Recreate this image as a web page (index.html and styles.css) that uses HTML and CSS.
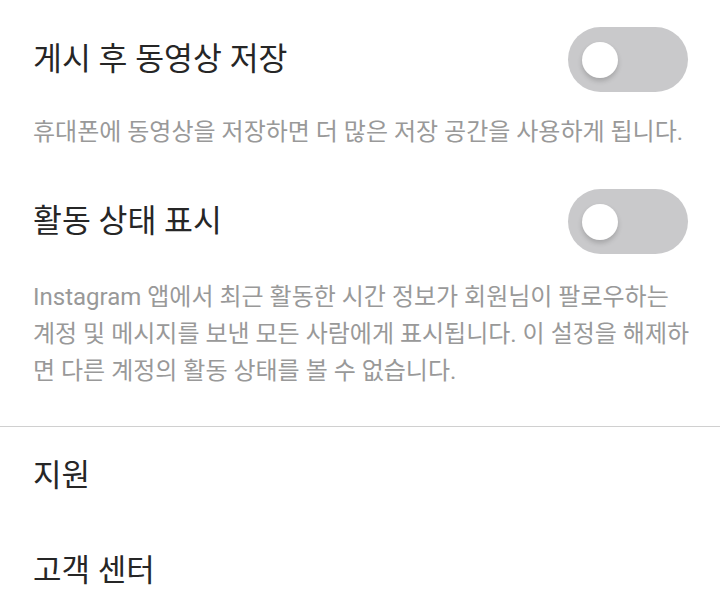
FILE: index.html
```html
<!DOCTYPE html>
<html lang="ko">
<head>
<meta charset="utf-8">
<link rel="stylesheet" href="styles.css">
</head>
<body>
<div class="page">
  <section class="setting setting-first">
    <div class="setting-row">
      <span class="setting-title">게시 후 동영상 저장</span>
      <span class="toggle"><span class="knob"></span></span>
    </div>
    <p class="setting-desc desc-short">휴대폰에 동영상을 저장하면 더 많은 저장 공간을 사용하게 됩니다.</p>
  </section>
  <section class="setting setting-second">
    <div class="setting-row">
      <span class="setting-title">활동 상태 표시</span>
      <span class="toggle"><span class="knob"></span></span>
    </div>
    <p class="setting-desc desc-long">Instagram 앱에서 최근 활동한 시간 정보가 회원님이 팔로우하는 계정 및 메시지를 보낸 모든 사람에게 표시됩니다. 이 설정을 해제하면 다른 계정의 활동 상태를 볼 수 없습니다.</p>
  </section>
  <hr class="divider">
  <div class="section-header">지원</div>
  <div class="menu-item">고객 센터</div>
</div>
</body>
</html>
```

FILE: styles.css
```css
html, body {
  margin: 0;
  padding: 0;
  background: #ffffff;
}

body {
  font-family: Roboto, "Noto Sans CJK KR", sans-serif;
  color: #262626;
}

.page {
  width: 720px;
  height: 614px;
  overflow: hidden;
  padding-top: 27px;
  box-sizing: border-box;
}

.setting {
  padding: 0 30px 0 33px;
}

.setting-row {
  display: flex;
  align-items: center;
  justify-content: space-between;
  height: 65px;
  margin-right: 2px;
}

.setting-title {
  font-size: 31.4px;
  line-height: 40px;
  color: #262626;
}

.toggle {
  position: relative;
  width: 120px;
  height: 65px;
  border-radius: 33px;
  background: #c9c9cb;
  flex: none;
}

.knob {
  position: absolute;
  left: 14px;
  top: 14.5px;
  width: 36px;
  height: 36px;
  border-radius: 50%;
  background: #ffffff;
  box-shadow: 0 3px 5px rgba(0, 0, 0, 0.18);
}

.setting-desc {
  margin: 0;
  font-size: 24px;
  line-height: 37px;
  color: #999999;
}

.desc-short {
  margin-top: 22px;
}

.setting-second {
  margin-top: 38px;
}

.desc-long {
  margin-top: 25px;
}

.divider {
  margin: 36px 0 0 0;
  border: 0;
  border-top: 1px solid #d0d0d0;
  height: 0;
}

.section-header,
.menu-item {
  padding-left: 33px;
  font-size: 31px;
  line-height: 40px;
  color: #262626;
}

.section-header {
  margin-top: 29px;
}

.menu-item {
  margin-top: 55px;
}
```
